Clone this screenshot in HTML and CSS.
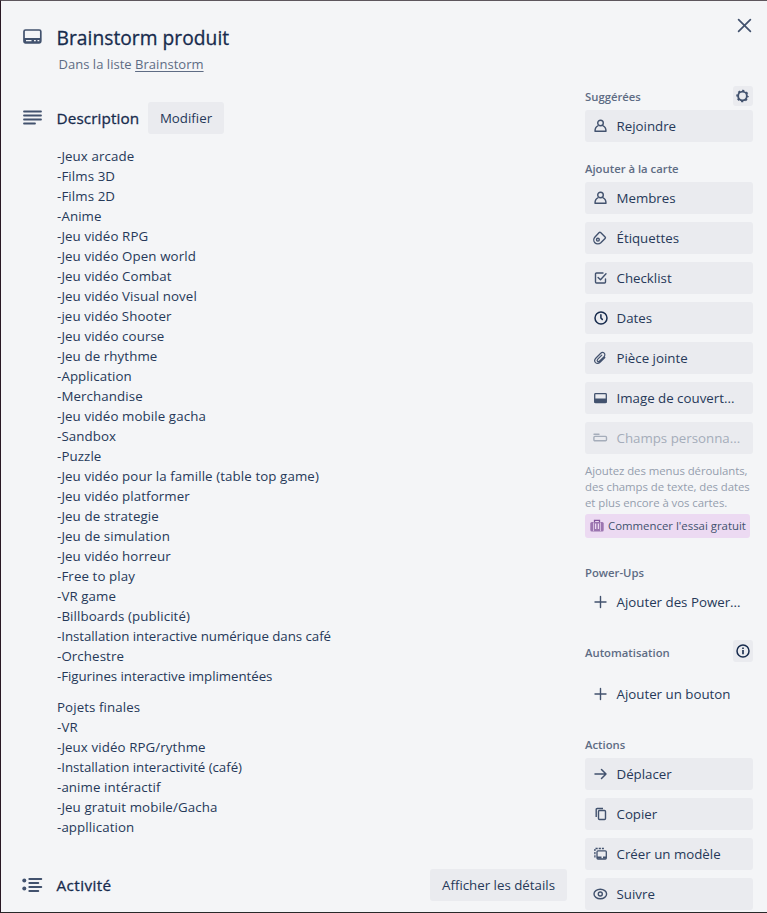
FILE: index.html
```html
<!DOCTYPE html>
<html lang="fr">
<head>
<meta charset="utf-8">
<title>Brainstorm produit</title>
<link rel="stylesheet" href="styles.css">
</head>
<body>
<div class="dialog">
  <main class="main">
    <header class="card-head">
      <svg class="icon-lg" viewBox="0 0 20 20"><rect x="2" y="4" width="16.800" height="12.800" rx="1.500" fill="none" stroke="currentColor" stroke-width="1.700"/><path d="M2 12h17v4.500H2z" fill="currentColor"/><path d="M4 14h5.500v1.200H4zM12 14h1.800v1.200H12zM15.500 14h1.800v1.200h-1.800z" fill="#f4f5f7"/></svg>
      <div>
        <h1>Brainstorm produit</h1>
        <p class="in-list">Dans la liste <a>Brainstorm</a></p>
      </div>
    </header>
    <div class="section-head">
      <svg class="icon-lg" viewBox="0 0 20 20"><path d="M2 3.5h17M2 7.500h17M2 11.500h17M2 15.500h11" stroke="currentColor" stroke-width="1.800" stroke-linecap="round"/></svg>
      <h2 class="desc-title">Description</h2>
      <button class="btn edit">Modifier</button>
    </div>
    <div class="desc">
      <p>-Jeux arcade<br>-Films 3D<br>-Films 2D<br>-Anime<br>-Jeu vidéo RPG<br>-Jeu vidéo Open world<br>-Jeu vidéo Combat<br>-Jeu vidéo Visual novel<br>-jeu vidéo Shooter<br>-Jeu vidéo course<br>-Jeu de rhythme<br>-Application<br>-Merchandise<br>-Jeu vidéo mobile gacha<br>-Sandbox<br>-Puzzle<br>-Jeu vidéo pour la famille (table top game)<br>-Jeu vidéo platformer<br>-Jeu de strategie<br>-Jeu de simulation<br>-Jeu vidéo horreur<br>-Free to play<br>-VR game<br>-Billboards (publicité)<br><span class="tight">-Installation interactive numérique dans café</span><br>-Orchestre<br><span class="tight">-Figurines interactive implimentées</span></p>
      <p>Pojets finales<br>-VR<br>-Jeux vidéo RPG/rythme<br><span class="tight">-Installation interactivité (café)</span><br>-anime intéractif<br>-Jeu gratuit mobile/Gacha<br>-appllication</p>
    </div>
    <div class="section-head activity">
      <svg class="icon-lg" viewBox="0 0 20 20"><g fill="currentColor"><circle cx="2.3" cy="5.500" r="2"/><circle cx="2.3" cy="13.500" r="2"/></g><path d="M7.3 4h12M7.3 8h9M7.3 12h12M7.3 16h9" stroke="currentColor" stroke-width="1.9" stroke-linecap="round"/></svg>
      <h2 class="activity-title">Activité</h2>
      <button class="btn details">Afficher les détails</button>
    </div>
  </main>
  <aside class="side">
    <div class="close"><svg viewBox="0 0 14 14"><path d="M1.5 1.5l11 11M12.5 1.5l-11 11" stroke="currentColor" stroke-width="1.6" stroke-linecap="round"/></svg></div>
    <div class="side-head"><h3>Suggérées</h3><span class="mini"><svg viewBox="0 0 14 14" fill="none" stroke="currentColor"><circle cx="6.500" cy="7" r="4.4" stroke-width="1.9"/><circle cx="6.500" cy="7" r="5.500" stroke-width="1.5" stroke-dasharray="2.16 2.16" stroke-dashoffset="1"/></svg></span></div>
    <div class="group">
      <button class="btn item"><svg viewBox="0 0 14 14"><use href="#person"/></svg><span>Rejoindre</span></button>
    </div>
    <h3 class="add-title">Ajouter à la carte</h3>
    <div class="group">
      <button class="btn item"><svg viewBox="0 0 14 14"><g id="person" fill="none" stroke="currentColor" stroke-width="1.4" stroke-linejoin="round"><circle cx="7.500" cy="4" r="2.800"/><path d="M5.300 6.700C3 7.500 2 9.400 2 12.300h11c0-2.900-1-4.800-3.300-5.600"/></g></svg><span>Membres</span></button>
      <button class="btn item"><svg viewBox="0 0 14 14" fill="none" stroke="currentColor" stroke-width="1.4" stroke-linejoin="round"><path d="M2 5.900L6.200 1.500Q6.900.9 7.600 1.500L12.100 6q.7.700 0 1.400L7.800 11.800C6.300 13.200 3.400 13.300 1.900 11.700.4 10.200.5 7.500 2 5.900z"/><circle cx="4.900" cy="8.700" r="1.400"/></svg><span>Étiquettes</span></button>
      <button class="btn item"><svg viewBox="0 0 14 14" fill="none" stroke="currentColor" stroke-width="1.400" stroke-linecap="round" stroke-linejoin="round"><path d="M10 2H3.500q-1 0-1 1v8q0 1 1 1h8q1 0 1-1V8M5.100 6.400L7.500 8.800l5.500-6"/></svg><span>Checklist</span></button>
      <button class="btn item"><svg class="dark" viewBox="0 0 14 14" fill="none" stroke="currentColor" stroke-width="1.500" stroke-linecap="round"><circle cx="8" cy="7" r="6"/><path d="M7.900 3.700V7l1.400 1.400"/></svg><span>Dates</span></button>
      <button class="btn item"><svg viewBox="0 0 14 14" fill="none" stroke="currentColor" stroke-width="1.200" stroke-linecap="round"><path d="M11.800 6.500L7.300 11c-1.500 1.500-3.500 1.800-4.800.6-1.200-1.300-.9-3.200.5-4.600l4.500-4.500c1.100-1.100 2.700-1.300 3.700-.3s.8 2.500-.3 3.600L6.600 10c-.7.700-1.500.8-2.100.3-.5-.6-.4-1.400.3-2.100l4-4"/></svg><span>Pièce jointe</span></button>
      <button class="btn item"><svg viewBox="0 0 14 14"><rect x="1.700" y="2.700" width="11.600" height="8.800" rx=".8" fill="none" stroke="currentColor" stroke-width="1.300"/><path d="M1.500 7.500h12V12h-12z" fill="currentColor"/></svg><span>Image de couvert...</span></button>
      <button class="btn item disabled"><svg viewBox="0 0 14 14" fill="none" stroke="currentColor" stroke-width="1.400" stroke-linecap="round"><path d="M1 3.200h5"/><rect x=".9" y="5.400" width="12.600" height="4.300" rx="1"/></svg><span>Champs personna...</span></button>
    </div>
    <p class="hint">Ajoutez des menus déroulants,<br>des champs de texte, des dates<br>et plus encore à vos cartes.</p>
    <button class="trial"><svg viewBox="0 0 14 14"><rect x=".3" y="3" width="13.400" height="9.500" rx="1.500" fill="currentColor" opacity=".75"/><path d="M4.500 3V1.400h5V3" fill="none" stroke="currentColor" stroke-width="1.300"/><path d="M3.500 3.500v8.500M10.500 3.500v8.500" stroke="#ecdaf2" stroke-width=".7"/><path d="M5.600 4.500v5.500M8.400 4.500v5.500" stroke="#ecdaf2" stroke-width="1.300"/></svg><span>Commencer l'essai gratuit</span></button>
    <h3 class="power-title">Power-Ups</h3>
    <div class="group">
      <button class="btn item plain"><svg viewBox="0 0 14 14"><path d="M7.500 1.500v11M2 7h11" stroke="currentColor" stroke-width="1.400" stroke-linecap="round"/></svg><span>Ajouter des Power...</span></button>
    </div>
    <div class="side-head auto"><h3>Automatisation</h3><span class="mini tall dark"><svg viewBox="0 0 14 14"><circle cx="7" cy="7" r="6" fill="none" stroke="currentColor" stroke-width="1.500"/><path d="M6.200 3.500h1.600V5H6.200zM6.200 6h1.600v4.300H6.200z" fill="currentColor"/></svg></span></div>
    <div class="group">
      <button class="btn item plain"><svg viewBox="0 0 14 14"><path d="M7.500 1.500v11M2 7h11" stroke="currentColor" stroke-width="1.400" stroke-linecap="round"/></svg><span>Ajouter un bouton</span></button>
    </div>
    <h3 class="action-title">Actions</h3>
    <div class="group">
      <button class="btn item"><svg viewBox="0 0 14 14" fill="none" stroke="currentColor" stroke-width="1.500" stroke-linecap="round" stroke-linejoin="round"><path d="M2 7h11M8.500 2.500L13 7l-4.500 4.500"/></svg><span>Déplacer</span></button>
      <button class="btn item"><svg viewBox="0 0 14 14" fill="none" stroke="currentColor" stroke-width="1.400" stroke-linejoin="round"><rect x="5.500" y="3.500" width="7" height="9" rx="1"/><path d="M3.200 10V2.500q0-1 1-1H10"/></svg><span>Copier</span></button>
      <button class="btn item"><svg viewBox="0 0 14 14" fill="none" stroke="currentColor" stroke-width="1.300"><path d="M1.900 10.500V1.500h9" stroke-dasharray="2.200 1"/><rect x="4" y="3.800" width="9.300" height="8.200" rx="1"/><path d="M4 10.500h4.500M10 10.500h3" stroke-width="2.200"/></svg><span>Créer un modèle</span></button>
      <button class="btn item"><svg viewBox="0 0 14 14" fill="none" stroke="currentColor" stroke-width="1.400"><ellipse cx="7.300" cy="7" rx="6.300" ry="4.700"/><circle cx="7.300" cy="7" r="2"/></svg><span>Suivre</span></button>
    </div>
  </aside>
</div>
</body>
</html>
```
FILE: styles.css
```css
* { box-sizing: border-box; margin: 0; padding: 0; }
body {
  width: 767px;
  height: 913px;
  overflow: hidden;
  background: #f4f5f7;
  color: #263959;
  font: 13.3px/20px "Open Sans", "Noto Sans", sans-serif;
}
svg { display: block; flex: none; overflow: visible; }
.dialog {
  display: flex;
  height: 913px;
  border-top: 1px solid #5d565d;
  border-left: 1px solid #291824;
  border-bottom: 1px solid #292929;
}
.main { width: 566px; padding: 25px 0 0 21px; }
.icon-lg { width: 20px; height: 20px; color: #42526e; }
.card-head { display: flex; gap: 15px; }
h1, h2 { color: #172b4d; font-weight: 500; -webkit-text-stroke: .3px currentColor; }
h1 { margin-left: -.5px; font-size: 19.2px; line-height: 24px; letter-spacing: .04px; }
.in-list { padding-left: 1.500px; margin-top: 4px; color: #5e6c84; font-size: 13px; letter-spacing: .03px; }
.in-list a { text-decoration: underline; text-underline-offset: 2px; }
.section-head { display: flex; align-items: center; height: 32px; margin-top: 28px; }
h2 { margin-left: 14.500px; font-size: 15.300px; line-height: 20px; letter-spacing: .1px; }
.activity-title { letter-spacing: .4px; }
.btn {
  height: 32px;
  border: 0;
  border-radius: 3px;
  background: #eaebef;
  color: #263959;
  font: inherit;
  white-space: nowrap;
}
.desc-title { width: 83.500px; }
.edit { width: 76px; margin-left: 8px; }
.desc { padding: 12px 0 0 35px; letter-spacing: .1px; }
.desc p + p { margin-top: 11px; }
.tight { letter-spacing: -.05px; }
.activity { margin-top: 32px; }
.details { width: 137px; margin-left: auto; }
.side { width: 168px; margin-left: 18px; }
.close { display: flex; justify-content: flex-end; padding: 17px 1px 0; height: 84px; color: #42526e; }
.close svg { width: 15px; height: 15px; }
.side-head { display: flex; align-items: center; justify-content: space-between; height: 22px; }
.side-head h3 { padding-top: 2px; }
h3 { color: #5e6c84; font-size: 11.300px; line-height: 20px; font-weight: 600; }
.mini { display: flex; align-items: center; justify-content: center; width: 20px; height: 20px; border-radius: 3px; background: #eaebef; color: #42526e; }
.mini svg { width: 14px; height: 14px; }
.mini.tall { height: 22px; }
.side-head + .group { margin-top: 3px; }
.group { display: grid; gap: 8px; }
.item { display: flex; align-items: center; gap: 9.500px; width: 168px; padding-left: 8px; text-align: left; }
.item svg { width: 14px; height: 14px; color: #42526e; }
.item svg.dark, .mini.dark { color: #172b4d; }
.item.disabled, .item.disabled svg { color: #a5adba; }
.item.plain { background: transparent; }
.add-title { margin: 17px 0 3px; }
.hint { margin-top: 9px; color: #959eae; font-size: 11.400px; line-height: 16px; white-space: nowrap; letter-spacing: -.06px; }
.trial {
  display: flex;
  align-items: center;
  gap: 4px;
  width: 165px;
  height: 24px;
  margin-top: 3px;
  padding-left: 5px;
  border: 0;
  border-radius: 3px;
  background: #ecdaf2;
  color: #42526e;
  font: 11.400px/16px "Open Sans", "Noto Sans", sans-serif;
  white-space: nowrap;
}
.trial svg { width: 14px; height: 14px; color: #80539a; }
.power-title { margin: 25px 0 3px; }
.side-head.auto { margin-top: 22px; }
.side-head.auto h3 { padding-top: 3px; }
.side-head.auto + .group { margin-top: 16px; }
.action-title { margin: 25px 0 3px; }
```
